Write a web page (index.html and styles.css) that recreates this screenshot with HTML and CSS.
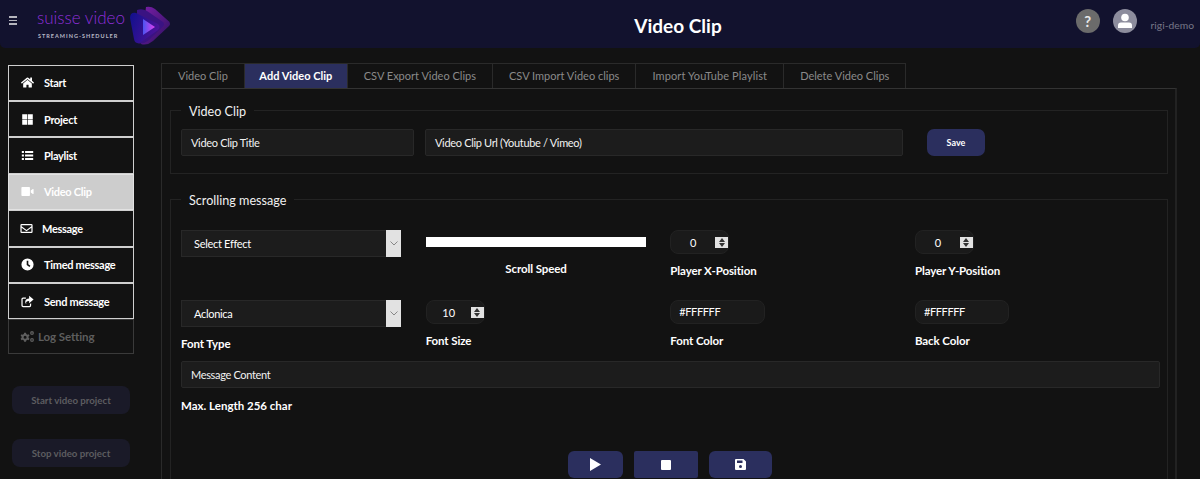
FILE: index.html
```html
<!DOCTYPE html>
<html>
<head>
<title>Video Clip</title>
<link rel="stylesheet" href="styles.css">
</head>
<body>
<header class="topbar">
  <div class="burger"><span></span><span></span><span></span></div>
  <div class="brand">
    <div class="brand-name">suisse video</div>
    <div class="brand-sub">STREAMING-SHEDULER</div>
  </div>
  <svg class="brand-logo" width="42" height="44" viewBox="0 0 42 44">
    <defs>
      <linearGradient id="lg0" x1="0" y1="0" x2="1" y2="1">
        <stop offset="0" stop-color="#7a1fa8"/>
        <stop offset="1" stop-color="#2c1060"/>
      </linearGradient>
      <linearGradient id="lg1" x1="0" y1="0" x2="1" y2="0.400">
        <stop offset="0" stop-color="#10108c"/>
        <stop offset="1" stop-color="#4a1398"/>
      </linearGradient>
      <linearGradient id="lg2" x1="0" y1="0" x2="1" y2="0">
        <stop offset="0" stop-color="#4a55f0"/>
        <stop offset="1" stop-color="#e040f0"/>
      </linearGradient>
    </defs>
    <path d="M17 4 Q22 3 26 6 L40 18.500 Q42 21 40 23 L24 38 Q18 43 12 41 Z" fill="url(#lg0)"/>
    <path d="M8 7 Q13 5 18 8 L34 19 Q36 21 34 23.500 L20 37 Q14 42 8 40 Z" fill="#3a1382"/>
    <path d="M1 15 Q1 9 7 10 L29 21 Q32 24 29 27 L12 39 Q6 42 5 36 Z" fill="url(#lg1)"/>
    <path d="M14 16 L26 24 L14 32 Z" fill="url(#lg2)"/>
  </svg>
  <h1 class="page-title">Video Clip</h1>
  <div class="top-right">
    <div class="help">?</div>
    <div class="avatar">
      <svg width="16" height="16" viewBox="0 0 16 16"><circle cx="8" cy="4.500" r="3.800" fill="#fff"/><path d="M1 15 V12.500 Q1 9.500 4 9.500 H12 Q15 9.500 15 12.500 V15 Z" fill="#fff"/></svg>
    </div>
    <div class="user">rigi-demo</div>
  </div>
</header>

<div class="page">
  <nav class="sidebar">
    <ul class="menu">
      <li class="item">
        <svg class="ico" viewBox="0 0 576 512"><path d="M280 148 96 300v164a16 16 0 0 0 16 16l112-.3a16 16 0 0 0 16-16V368a16 16 0 0 1 16-16h64a16 16 0 0 1 16 16v95.600a16 16 0 0 0 16 16.100l112 .3a16 16 0 0 0 16-16V300L296 148a12 12 0 0 0-16 0zM572 251l-84-69V44a12 12 0 0 0-12-12h-56a12 12 0 0 0-12 12v72l-90-74a48 48 0 0 0-61 0L4 251a12 12 0 0 0-2 17l26 31a12 12 0 0 0 17 2L280 107a12 12 0 0 1 16 0l235 194a12 12 0 0 0 17-2l26-31a12 12 0 0 0-2-17z"/></svg>
        Start
      </li>
      <li class="item">
        <svg class="ico" viewBox="0 0 16 16"><path d="M1.500 1.500h6.100v6.100H1.500zM8.400 1.500h6.100v6.100H8.400zM1.500 8.400h6.100v6.100H1.500zM8.400 8.400h6.100v6.100H8.400z"/></svg>
        Project
      </li>
      <li class="item">
        <svg class="ico" viewBox="0 0 16 16"><path d="M1 2.500h2.600v2.400H1zM5 2.500h10v2.400H5zM1 6.800h2.600v2.400H1zM5 6.800h10v2.400H5zM1 11.100h2.600v2.400H1zM5 11.100h10v2.400H5z"/></svg>
        Playlist
      </li>
      <li class="item active">
        <svg class="ico" viewBox="0 0 16 16"><path d="M.5 3.500Q.5 2.500 1.500 2.500h8.500q1 0 1 1v9q0 1-1 1H1.500q-1 0-1-1zM12 6.800 14.500 5q1-.5 1 .5v5q0 1-1 .5L12 9.200z"/></svg>
        Video Clip
      </li>
      <li class="item item-tight">
        <svg class="ico" viewBox="0 0 16 16"><path fill-rule="evenodd" d="M2 2.500h12q1.500 0 1.500 1.500v8q0 1.500-1.500 1.500H2Q.5 13.500.5 12V4Q.5 2.500 2 2.500zM2 4v1.200l6 4.500 6-4.500V4zm0 3v5h12V7L8 11.500z"/></svg>
        Message
      </li>
      <li class="item">
        <svg class="ico" viewBox="0 0 16 16"><path fill-rule="evenodd" d="M8 .5a7.500 7.500 0 1 0 0 15 7.500 7.500 0 0 0 0-15zM7 3.500h2v4.100l2.600 1.900-1.200 1.600L7 8.600z"/></svg>
        Timed message
      </li>
      <li class="item">
        <svg class="ico" viewBox="0 0 16 16"><path d="M10 1l5.500 4.500L10 10V7.300c-3 0-4.300.9-3.500 3.700C4.500 9.700 4.300 4.500 10 4.200zM2.500 3H6v1.500H2.800q-.8 0-.8.800v7.400q0 .8.800.8h7.400q.8 0 .8-.8V11l1.500-1v3q0 2-2 2H2.500q-2 0-2-2V5q0-2 2-2z"/></svg>
        Send message
      </li>
      <li class="item item-off">
        <svg class="ico ico-wide" viewBox="0 0 20 16"><path fill-rule="evenodd" d="M5.500 3h2.500l.4 1.700 1.500.8 1.600-.6 1.200 2.100-1.300 1.100v1.700l1.300 1.100-1.200 2.100-1.600-.6-1.500.8-.4 1.700H5.500l-.4-1.700-1.500-.8-1.600.6L.8 10.900l1.300-1.100V8.100L.8 7l1.200-2.100 1.600.6 1.500-.8zM6.800 7a2 2 0 1 0 0 4 2 2 0 0 0 0-4z"/><path fill-rule="evenodd" d="M16 .8a2.600 2.600 0 1 0 0 5.200 2.600 2.600 0 0 0 0-5.200zm0 1.700a.9.900 0 1 1 0 1.800.9.900 0 0 1 0-1.800zM16 10a2.600 2.600 0 1 0 0 5.200 2.600 2.600 0 0 0 0-5.200zm0 1.700a.9.900 0 1 1 0 1.800.9.900 0 0 1 0-1.800z"/></svg>
        Log Setting
      </li>
    </ul>
    <div class="side-btn">Start video project</div>
    <div class="side-btn">Stop video project</div>
  </nav>

  <main class="main">
    <div class="tabs">
      <div class="tab">Video Clip</div>
      <div class="tab tab-active">Add Video Clip</div>
      <div class="tab">CSV Export Video Clips</div>
      <div class="tab">CSV Import Video clips</div>
      <div class="tab tab-wide">Import YouTube Playlist</div>
      <div class="tab">Delete Video Clips</div>
    </div>
    <div class="panel">
      <fieldset class="box box-clip">
        <legend>Video Clip</legend>
        <div class="clip-row">
          <div class="field title-field">Video Clip Title</div>
          <div class="field url-field">Video Clip Url (Youtube / Vimeo)</div>
          <div class="btn save-btn">Save</div>
        </div>
      </fieldset>

      <fieldset class="box box-msg">
        <legend>Scrolling message</legend>
        <div class="opts">
          <div class="opt opt-first">
            <div class="select"><div class="select-text">Select Effect</div><div class="select-arrow"><svg width="8" height="5" viewBox="0 0 8 5"><path d="M.5.5 4 4 7.500.5" fill="none" stroke="#888"/></svg></div></div>
          </div>
          <div class="opt opt-first">
            <div class="slider"></div>
            <div class="opt-label center">Scroll Speed</div>
          </div>
          <div class="opt opt-first">
            <div class="num"><span class="num-val">0</span><span class="spin"><i class="up"></i><i class="dn"></i></span></div>
            <div class="opt-label">Player X-Position</div>
          </div>
          <div class="opt opt-first">
            <div class="num"><span class="num-val">0</span><span class="spin"><i class="up"></i><i class="dn"></i></span></div>
            <div class="opt-label">Player Y-Position</div>
          </div>

          <div class="opt">
            <div class="select"><div class="select-text">Aclonica</div><div class="select-arrow"><svg width="8" height="5" viewBox="0 0 8 5"><path d="M.5.5 4 4 7.500.5" fill="none" stroke="#888"/></svg></div></div>
            <div class="opt-label">Font Type</div>
          </div>
          <div class="opt">
            <div class="num"><span class="num-val">10</span><span class="spin"><i class="up"></i><i class="dn"></i></span></div>
            <div class="opt-label">Font Size</div>
          </div>
          <div class="opt">
            <div class="hex">#FFFFFF</div>
            <div class="opt-label">Font Color</div>
          </div>
          <div class="opt">
            <div class="hex">#FFFFFF</div>
            <div class="opt-label">Back Color</div>
          </div>
        </div>
        <div class="field msg-field">Message Content</div>
        <div class="max-len">Max. Length 256 char</div>
        <div class="actions">
          <div class="btn act act-play"><svg width="11" height="13" viewBox="0 0 11 13"><path d="M0 0 11 6.500 0 13z" fill="#fff"/></svg></div>
          <div class="btn act act-stop"><svg width="10" height="10" viewBox="0 0 10 10"><rect width="10" height="10" rx="1" fill="#fff"/></svg></div>
          <div class="btn act act-disk"><svg width="11" height="11" viewBox="0 0 11 11"><path fill-rule="evenodd" d="M1 0h7.500L11 2.500V10q0 1-1 1H1q-1 0-1-1V1q0-1 1-1zm1 1.500v2.500h5.500V1.500zM5.500 6a1.500 1.500 0 1 0 0 3 1.500 1.500 0 0 0 0-3z" fill="#fff"/></svg></div>
        </div>
      </fieldset>
    </div>
  </main>
</div>
</body>
</html>
```
FILE: styles.css
```css
html, body {
  margin: 0;
  height: 479px;
  overflow: hidden;
}
body {
  background: #121212;
  color: #fff;
  font-family: Lato, "Liberation Sans", sans-serif;
  font-size: 11px;
}

/* top bar */
.topbar {
  height: 48px;
  background: #12122e;
  border-radius: 0 0 5px 5px;
  display: flex;
  align-items: center;
  position: relative;
}
.burger {
  margin-left: 9px;
  margin-bottom: 7px;
  width: 8px;
  display: flex;
  flex-direction: column;
  gap: 2px;
}
.burger span {
  height: 1.500px;
  background: #b5b5bd;
}
.brand {
  margin-left: 20px;
  margin-bottom: 2px;
  width: 92px;
}
.brand-name {
  color: #8e2fd8;
  font-size: 17px;
  font-weight: 300;
  line-height: 22px;
  white-space: nowrap;
}
.brand-sub {
  color: #b9b9c6;
  font-size: 5.500px;
  font-weight: 700;
  letter-spacing: 1px;
  line-height: 8px;
  margin-top: 3px;
  padding-left: 1px;
  white-space: nowrap;
}
.brand-logo {
  margin-top: 2px;
}
.page-title {
  position: absolute;
  left: 156px;
  right: 0;
  top: 0;
  margin: 0;
  text-align: center;
  font-size: 19px;
  font-weight: 700;
  line-height: 52px;
}
.top-right {
  margin-left: auto;
  margin-right: 6px;
  display: flex;
  align-items: center;
}
.help {
  width: 24px;
  height: 24px;
  margin-bottom: 6px;
  border-radius: 50%;
  background: #6b6b6b;
  color: #e8e8e8;
  font-size: 15px;
  font-weight: 700;
  text-align: center;
  line-height: 24px;
}
.avatar {
  width: 24px;
  height: 24px;
  margin-bottom: 6px;
  margin-left: 13px;
  border-radius: 50%;
  background: #8d8d9d;
  display: flex;
  align-items: center;
  justify-content: center;
}
.user {
  margin-left: 14px;
  color: #777787;
  font-size: 10.300px;
  padding-top: 2px;
}

/* layout */
.page {
  display: flex;
  align-items: flex-start;
}

/* left menu */
.sidebar {
  width: 126px;
  margin-left: 8px;
  margin-top: 16.600px;
}
.menu {
  list-style: none;
  margin: 0;
  padding: 0;
}
.item {
  height: 36.400px;
  box-sizing: border-box;
  border: 1px solid #cfcfcf;
  display: flex;
  align-items: center;
  padding-left: 12px;
  font-size: 11px;
  font-weight: 700;
  letter-spacing: -.3px;
  gap: 10px;
  background: #121212;
}
.ico {
  width: 13px;
  height: 13px;
  fill: #fff;
  flex: none;
}
.item-tight {
  padding-left: 11px;
  gap: 9px;
}
.active {
  background: #cdcdcd;
  border-color: #e2e2e2;
}
.item-off {
  height: 35px;
  color: #5e5e5e;
  border-color: #3a3a3a;
  font-size: 11.500px;
  letter-spacing: -.1px;
  gap: 3px;
  padding-left: 11px;
}
.item-off .ico {
  fill: #5e5e5e;
}
.ico-wide {
  width: 15px;
}
.side-btn {
  width: 118px;
  height: 28px;
  margin: 32px 0 0 4px;
  border-radius: 8px;
  background: #1a1a28;
  color: #5d5d60;
  font-size: 9.700px;
  font-weight: 700;
  text-align: center;
  line-height: 28px;
}
.side-btn + .side-btn {
  margin-top: 25px;
}

/* tabs */
.main {
  margin-left: 27px;
  margin-top: 15px;
  width: 1016px;
}
.tabs {
  display: inline-flex;
  height: 25px;
  box-sizing: border-box;
  border: 1px solid #2a2a2a;
  border-bottom: 0;
  vertical-align: top;
}
.tab {
  padding: 0 16px;
  color: #8a8a8a;
  font-size: 11px;
  line-height: 24px;
  border-left: 1px solid #2a2a2a;
  white-space: nowrap;
}
.tab:first-child {
  border-left: 0;
}
.tab-active {
  padding: 0 14.500px;
  background: #2b2f5e;
  color: #fff;
  font-weight: 700;
}
.tab-wide {
  letter-spacing: .12px;
}
.panel {
  box-sizing: border-box;
  width: 1016px;
  height: 400px;
  border-top: 1px solid #333;
  border-left: 1px solid #2a2a2a;
  border-right: 2px solid #222;
  padding: 11.500px 7px 0 8px;
}

/* fieldsets */
.box {
  margin: 0;
  padding: 0 7px 0 10px;
  border: 1px solid #232323;
  min-width: 0;
}
.box legend {
  padding: 3px 8px 0;
  font-size: 12.600px;
  line-height: 16px;
  color: #f0f0f0;
}
.box-clip {
  height: 73.500px;
  box-sizing: border-box;
}
.clip-row {
  display: flex;
  align-items: center;
  padding-top: 9.500px;
}
.field {
  height: 27px;
  box-sizing: border-box;
  background: #1c1c1c;
  border: 1px solid #282828;
  border-radius: 2px;
  padding-left: 9px;
  font-size: 11px;
  letter-spacing: -.33px;
  line-height: 25px;
  color: #f2f2f2;
}
.title-field {
  width: 233px;
}
.url-field {
  width: 478px;
  margin-left: 11px;
}
.btn {
  background: #2b2f5e;
  color: #fff;
}
.save-btn {
  width: 58px;
  height: 27px;
  margin-left: 24px;
  border-radius: 7px;
  font-size: 9px;
  font-weight: 700;
  text-align: center;
  line-height: 28px;
}
.box-msg {
  margin-top: 15.500px;
  height: 300px;
  box-sizing: border-box;
}

/* options grid */
.opts {
  display: grid;
  grid-template-columns: repeat(4, 220.670px);
  column-gap: 24px;
  padding-top: 21.500px;
}
.opt-first {
  height: 70px;
}
.opt {
  min-width: 0;
}
.select {
  display: flex;
  width: 220px;
  height: 27px;
  box-sizing: border-box;
  background: #1c1c1c;
  border: 1px solid #282828;
}
.select-text {
  flex: 1;
  padding-left: 12px;
  line-height: 25px;
  font-size: 11px;
  letter-spacing: -.3px;
}
.select-arrow {
  width: 15px;
  margin: -1px -1px -1px 0;
  background: #e2e2e2;
  display: flex;
  align-items: center;
  justify-content: center;
}
.slider {
  height: 10px;
  background: #fff;
  margin-top: 7px;
}
.opt-label {
  font-size: 11.500px;
  font-weight: 700;
  letter-spacing: -.1px;
  line-height: 14px;
  margin-top: 10px;
}
.opt-first .slider + .opt-label {
  margin-top: 15px;
}
.center {
  text-align: center;
}
.num {
  width: 59px;
  height: 24px;
  box-sizing: border-box;
  background: #1a1a1a;
  border: 1px solid #222;
  border-radius: 8px;
  display: flex;
  align-items: center;
  font-size: 11px;
}
.num-val {
  flex: 1;
  text-align: center;
}
.spin {
  width: 13px;
  height: 11px;
  background: #e2e2e2;
  display: flex;
  flex-direction: column;
  align-items: center;
  justify-content: center;
  gap: 1px;
}
.up {
  border: 3.500px solid transparent;
  border-top: 0;
  border-bottom: 4px solid #333;
}
.dn {
  border: 3.500px solid transparent;
  border-bottom: 0;
  border-top: 4px solid #333;
}
.hex {
  height: 24px;
  box-sizing: border-box;
  background: #1a1a1a;
  border: 1px solid #222;
  border-radius: 8px;
  padding-left: 8px;
  line-height: 22px;
  font-size: 11px;
  letter-spacing: -.4px;
}
.opt:nth-child(7) .hex {
  width: 95px;
}
.opt:nth-child(8) .hex {
  width: 94px;
}
.msg-field {
  margin-top: 10px;
}
.max-len {
  margin-top: 11px;
  font-size: 11.500px;
  font-weight: 700;
  line-height: 14px;
}
.actions {
  display: flex;
  justify-content: center;
  margin-top: 38px;
  padding-right: 2px;
}
.act {
  height: 27px;
  display: flex;
  align-items: center;
  justify-content: center;
}
.act-play {
  width: 55px;
  border-radius: 6px;
}
.act-stop {
  width: 64px;
  margin-left: 11px;
  border-radius: 2px;
}
.act-disk {
  width: 63px;
  margin-left: 11px;
  border-radius: 6px;
}
```
